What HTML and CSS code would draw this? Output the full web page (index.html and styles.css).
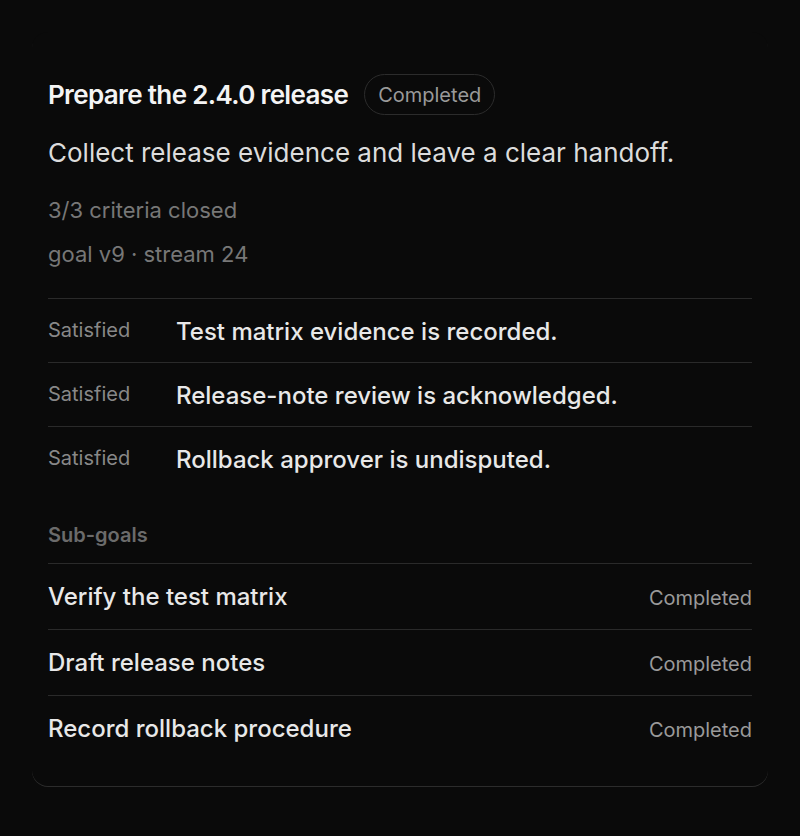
FILE: index.html
```html
<!DOCTYPE html>
<html>
<head>
  <title>Goal</title>
  <link rel="stylesheet" href="styles.css">
</head>
<body>
  <div class="card">
    <div class="header">
      <h2 class="title">Prepare the 2.4.0 release</h2>
      <span class="badge">Completed</span>
    </div>
    <p class="desc">Collect release evidence and leave a clear handoff.</p>
    <div class="meta">3/3 criteria closed</div>
    <div class="meta">goal v9 · stream 24</div>

    <div class="criteria">
      <div class="crit-row">
        <span class="crit-status">Satisfied</span>
        <span class="crit-text">Test matrix evidence is recorded.</span>
      </div>
      <div class="crit-row">
        <span class="crit-status">Satisfied</span>
        <span class="crit-text">Release-note review is acknowledged.</span>
      </div>
      <div class="crit-row">
        <span class="crit-status">Satisfied</span>
        <span class="crit-text">Rollback approver is undisputed.</span>
      </div>
    </div>

    <div class="section-label">Sub-goals</div>
    <div class="subgoals">
      <div class="sub-row">
        <span class="sub-name">Verify the test matrix</span>
        <span class="sub-status">Completed</span>
      </div>
      <div class="sub-row">
        <span class="sub-name">Draft release notes</span>
        <span class="sub-status">Completed</span>
      </div>
      <div class="sub-row">
        <span class="sub-name">Record rollback procedure</span>
        <span class="sub-status">Completed</span>
      </div>
    </div>
  </div>
</body>
</html>
```

FILE: styles.css
```css
html, body { background: #0a0a0a; }
body { margin: 0; padding: 32px; font-family: Inter, "Noto Sans", sans-serif; color: #e6e6e6; }

.card {
  padding: 42px 16px 25px;
  border-radius: 16px;
  background: #0a0a0a;
  box-shadow: 0 1px 0 rgba(255, 255, 255, 0.14);
}

.header { display: flex; align-items: center; gap: 16px; }
.title { margin: 0; font-size: 26px; font-weight: 600; letter-spacing: -0.025em; color: #f4f4f4; }
.badge {
  height: 39px; padding: 0 13px; display: inline-flex; align-items: center;
  border: 1px solid #2c2c2c; border-radius: 999px;
  font-size: 20px; color: #9a9a9a;
}

.desc { margin: 22px 0 27px; font-size: 26px; line-height: 32px; color: #dcdcdc; }
.meta { font-size: 22px; line-height: 28px; color: #777; margin-bottom: 16px; }
.meta:last-of-type { margin-bottom: 0; }

.criteria { margin-top: 30px; }
.crit-row {
  display: flex; align-items: baseline;
  padding: 17px 0 14px;
  border-top: 1px solid #2a2a2a;
}
.crit-status { width: 128px; flex-shrink: 0; font-size: 20px; color: #888; position: relative; top: -3px; }
.crit-text { font-size: 24px; line-height: 32px; font-weight: 500; color: #e8e8e8; }

.section-label { margin-top: 33px; padding-bottom: 16px; font-size: 20px; line-height: 24px; font-weight: 600; color: #6b6b6b; }

.sub-row {
  display: flex; justify-content: space-between; align-items: baseline;
  padding: 17px 0 16px;
  border-top: 1px solid #2a2a2a;
}
.sub-name { font-size: 24px; line-height: 32px; font-weight: 500; color: #e8e8e8; }
.sub-status { font-size: 20px; color: #9a9a9a; }
```
